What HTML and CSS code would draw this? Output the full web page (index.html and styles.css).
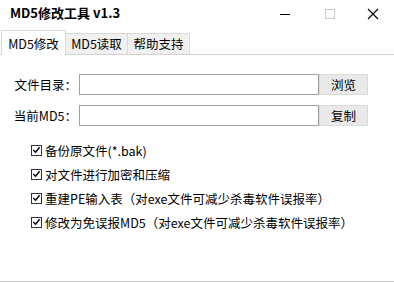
FILE: index.html
```html
<!DOCTYPE html>
<html>
<head>
<meta charset="utf-8">
<link rel="stylesheet" href="styles.css">
</head>
<body>
<div class="window">
  <div class="titlebar">
    <div class="title">MD5修改工具 v1.3</div>
    <div class="controls">
      <span class="ctl min"><svg width="12" height="12" viewBox="0 0 12 12"><path d="M1 6.5H11" stroke="#000" stroke-width="1"/></svg></span>
      <span class="ctl max"><svg width="12" height="12" viewBox="0 0 12 12"><rect x="1.5" y="1.5" width="9" height="9" fill="none" stroke="#c8c8c8" stroke-width="1"/></svg></span>
      <span class="ctl close"><svg width="12" height="12" viewBox="0 0 12 12"><path d="M1 1L11 11M11 1L1 11" stroke="#000" stroke-width="1.1"/></svg></span>
    </div>
  </div>
  <div class="tabs">
    <div class="tab active">MD5修改</div>
    <div class="tab">MD5读取</div>
    <div class="tab">帮助支持</div>
  </div>
  <div class="panel">
    <div class="field">
      <span class="label">文件目录：</span>
      <span class="input"></span>
      <span class="btn">浏览</span>
    </div>
    <div class="field">
      <span class="label">当前MD5：</span>
      <span class="input"></span>
      <span class="btn">复制</span>
    </div>
    <div class="checks">
      <div class="check"><span class="box"><svg width="10" height="10" viewBox="0 0 10 10"><path d="M1.5 5L4 7.5L8.5 2" fill="none" stroke="#000" stroke-width="1.6"/></svg></span>备份原文件(*.bak)</div>
      <div class="check"><span class="box"><svg width="10" height="10" viewBox="0 0 10 10"><path d="M1.5 5L4 7.5L8.5 2" fill="none" stroke="#000" stroke-width="1.6"/></svg></span>对文件进行加密和压缩</div>
      <div class="check"><span class="box"><svg width="10" height="10" viewBox="0 0 10 10"><path d="M1.5 5L4 7.5L8.5 2" fill="none" stroke="#000" stroke-width="1.6"/></svg></span>重建PE输入表（对exe文件可减少杀毒软件误报率）</div>
      <div class="check"><span class="box"><svg width="10" height="10" viewBox="0 0 10 10"><path d="M1.5 5L4 7.5L8.5 2" fill="none" stroke="#000" stroke-width="1.6"/></svg></span>修改为免误报MD5（对exe文件可减少杀毒软件误报率）</div>
    </div>
  </div>
</div>
</body>
</html>
```

FILE: styles.css
```css
html, body {
  margin: 0;
  padding: 0;
  background: #fff;
}
.window {
  width: 394px;
  height: 282px;
  box-sizing: border-box;
  border-bottom: 1px solid #c8c8c8;
  font-family: "Noto Sans CJK SC", "Noto Sans", sans-serif;
  font-size: 12px;
  color: #000;
  display: flex;
  flex-direction: column;
}
.titlebar {
  height: 29px;
  display: flex;
  align-items: flex-start;
  justify-content: space-between;
}
.title {
  font-weight: bold;
  font-size: 13px;
  padding: 4px 0 0 10px;
  line-height: 18px;
}
.controls {
  display: flex;
  padding-top: 7px;
}
.ctl {
  width: 45px;
  height: 14px;
  display: flex;
  justify-content: center;
  align-items: center;
}
.close {
  width: 42px;
}
.tabs {
  height: 25px;
  display: flex;
  align-items: flex-end;
  border-bottom: 1px solid #d0d0d0;
  padding-left: 1px;
}
.tab {
  height: 21px;
  line-height: 20px;
  box-sizing: border-box;
  padding: 0 5px;
  border: 1px solid #d9d9d9;
  border-bottom: none;
  background: #f0f0f0;
  width: 63px;
  text-align: center;
  font-size: 12.5px;
}
.tab.active {
  height: 25px;
  line-height: 25px;
  background: #fff;
  width: 65px;
  position: relative;
  top: 1px;
}
.tab + .tab {
  margin-left: -1px;
}
.panel {
  padding-top: 19px;
}
.field {
  display: flex;
  align-items: center;
  height: 21px;
  margin-bottom: 10px;
}
.label {
  width: 79px;
  padding-right: 2px;
  box-sizing: border-box;
  text-align: right;
  font-size: 12.5px;
}
.input {
  width: 240px;
  height: 21px;
  box-sizing: border-box;
  border: 1px solid #a0a0a0;
  background: #fff;
}
.btn {
  width: 49px;
  height: 21px;
  box-sizing: border-box;
  border: 1px solid #dadada;
  background: #e9e9e9;
  text-align: center;
  line-height: 19px;
  font-size: 12.5px;
}
.checks {
  padding: 5px 0 0 31px;
  display: flex;
  flex-direction: column;
  gap: 6px;
}
.check {
  height: 18px;
  display: flex;
  align-items: center;
  font-size: 12.5px;
}
.box {
  width: 11px;
  height: 11px;
  box-sizing: border-box;
  border: 1px solid #333;
  display: flex;
  align-items: center;
  justify-content: center;
  margin-right: 3px;
}
.box svg {
  display: block;
}
```
